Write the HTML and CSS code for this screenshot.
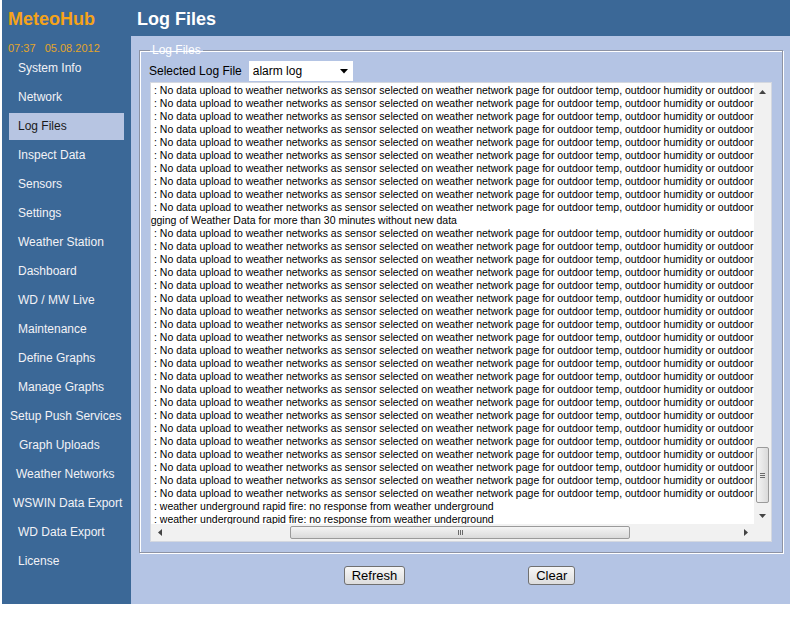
FILE: index.html
```html
<!DOCTYPE html>
<html lang='en'>
<head>
    <meta charset='UTF-8'>
    <title>MeteoHub - Log Files</title>
    <link rel="stylesheet" href="styles.css">
</head>
<body>
    <div class='frame'>
        <!-- Top left logo -->
        <div class='logo'>MeteoHub</div>
        <!-- Page title -->
        <div class='page-title'>Log Files</div>

        <!-- Sidebar -->
        <div class='sidebar'>
            <div class='clock'>07:37&nbsp;&nbsp;&nbsp;05.08.2012</div>
            <div class='nav-item'>System Info</div>
            <div class='nav-item'>Network</div>
            <div class='nav-item active'>Log Files</div>
            <div class='nav-item'>Inspect Data</div>
            <div class='nav-item'>Sensors</div>
            <div class='nav-item'>Settings</div>
            <div class='nav-item'>Weather Station</div>
            <div class='nav-item'>Dashboard</div>
            <div class='nav-item'>WD / MW Live</div>
            <div class='nav-item'>Maintenance</div>
            <div class='nav-item'>Define Graphs</div>
            <div class='nav-item'>Manage Graphs</div>
            <div class='nav-item wide'>Setup Push Services</div>
            <div class='nav-item nudge'>Graph Uploads</div>
            <div class='nav-item mid'>Weather Networks</div>
            <div class='nav-item semi'>WSWIN Data Export</div>
            <div class='nav-item'>WD Data Export</div>
            <div class='nav-item'>License</div>
        </div>

        <!-- Main panel -->
        <div class='main'>
            <fieldset class='log-set'>
                <legend>Log Files</legend>
                <div class='select-row'>
                    <span class='select-label'>Selected Log File</span>
                    <div class='select-field'>
                        <span>alarm log</span>
                        <svg width='8' height='5' viewBox='0 0 8 5'><path d='M0 0h8L4 4.5z' fill='#000'/></svg>
                    </div>
                </div>

                <div class='log-box'>
                    <div class='log-lines' id='log-lines'></div>
                    <div class='vscroll'>
                        <div class='arrow'><svg width='7' height='4' viewBox='0 0 7 4'><path d='M0 4h7L3.5 0z' fill='#444'/></svg></div>
                        <div class='vtrack'>
                            <div class='vthumb'><span class='grip-v'></span></div>
                        </div>
                        <div class='arrow'><svg width='7' height='4' viewBox='0 0 7 4'><path d='M0 0h7L3.5 4z' fill='#444'/></svg></div>
                    </div>
                    <div class='hscroll'>
                        <div class='arrow'><svg width='4' height='7' viewBox='0 0 4 7'><path d='M4 0v7L0 3.5z' fill='#444'/></svg></div>
                        <div class='htrack'>
                            <div class='hthumb'><span class='grip-h'></span></div>
                        </div>
                        <div class='arrow'><svg width='4' height='7' viewBox='0 0 4 7'><path d='M0 0v7l4-3.5z' fill='#444'/></svg></div>
                    </div>
                    <div class='corner'></div>
                </div>
            </fieldset>

            <div class='actions'>
                <button class='btn'>Refresh</button>
                <button class='btn'>Clear</button>
            </div>
        </div>
    </div>

    <script>
        // fill the log view
        const noData = ': No data upload to weather networks as sensor selected on weather network page for outdoor temp, outdoor humidity or outdoor pressure';
        const rapid = ': weather underground rapid fire: no response from weather underground';
        const lines = [];
        for (let i = 0; i < 10; i++) lines.push(['', noData]);
        lines.push(['alarm', 'Logging of Weather Data for more than 30 minutes without new data']);
        for (let i = 0; i < 21; i++) lines.push(['', noData]);
        lines.push(['', rapid]);
        lines.push(['', rapid]);

        const box = document.getElementById('log-lines');
        lines.forEach(([cls, text]) => {
            const div = document.createElement('div');
            div.className = 'log-line ' + cls;
            div.textContent = text;
            box.appendChild(div);
        });
    </script>
</body>
</html>
```

FILE: styles.css
```css
* {
    box-sizing: border-box;
    margin: 0;
    padding: 0;
    font-family: 'Liberation Sans', Arial, sans-serif;
}

body {
    background-color: #ffffff;
}

.frame {
    width: 788px;
    height: 604px;
    margin-left: 2px;
    background-color: #3b6897;
    display: grid;
    grid-template-columns: 129px 1fr;
    grid-template-rows: 36px 1fr;
}

.logo {
    font-size: 18px;
    font-weight: bold;
    color: #f5a31a;
    padding: 9px 0 0 6px;
}

.page-title {
    font-size: 18px;
    font-weight: bold;
    color: #ffffff;
    padding: 9px 0 0 6px;
}

.sidebar {
    display: flex;
    flex-direction: column;
    gap: 2px;
    padding-left: 7px;
}

.clock {
    font-size: 11px;
    color: #e3a52a;
    height: 17px;
    line-height: 12px;
    padding-top: 6px;
    margin-left: -1px;
}

.nav-item {
    width: 115px;
    height: 27px;
    line-height: 27px;
    padding-left: 9px;
    font-size: 12px;
    color: #f2f2f6;
    white-space: nowrap;
}

.nav-item.active {
    background-color: #b7c5e2;
    color: #1a1a1a;
}

.nav-item.wide {
    padding-left: 1px;
}

.nav-item.nudge {
    padding-left: 10px;
}

.nav-item.mid {
    padding-left: 7px;
}

.nav-item.semi {
    padding-left: 4px;
}

.main {
    background-color: #b4c4e4;
    padding: 7px 7px 0 8px;
}

/* Fieldset */
.log-set {
    border: 1px solid #8d93a4;
    box-shadow: inset 1px 1px 0 #ffffff, 1px 1px 0 #ffffff;
    padding: 4px 10px 10px 10px;
}

.log-set legend {
    font-size: 12px;
    line-height: 14px;
    color: #ffffff;
    padding: 0 2px;
}

.select-row {
    display: flex;
    align-items: center;
    gap: 7px;
    margin-bottom: 1px;
}

.select-label {
    font-size: 12px;
    color: #000000;
    margin-left: -1px;
}

.select-field {
    width: 104px;
    height: 20px;
    background-color: #ffffff;
    display: flex;
    justify-content: space-between;
    align-items: center;
    padding: 0 5px 0 4px;
    font-size: 12px;
    color: #000000;
}

/* Log view */
.log-box {
    display: grid;
    grid-template-columns: 1fr 17px;
    grid-template-rows: 441px 17px;
    background-color: #ffffff;
    border: 1px solid #d4d8e0;
}

.log-lines {
    overflow: hidden;
    padding: 1px 0 0 3px;
}

.log-line {
    font-size: 10.5px;
    line-height: 13px;
    color: #000000;
    white-space: pre;
}

.log-line.alarm {
    margin-left: -15px;
}

.vscroll {
    display: flex;
    flex-direction: column;
    background-color: #f1f1f1;
}

.hscroll {
    display: flex;
    background-color: #f1f1f1;
}

.arrow {
    width: 17px;
    height: 17px;
    display: flex;
    justify-content: center;
    align-items: center;
    flex-shrink: 0;
}

.vtrack {
    flex: 1;
    padding: 0 2px;
}

.vthumb {
    margin-top: 347px;
    height: 56px;
    border: 1px solid #9a9a9a;
    border-radius: 2px;
    background: linear-gradient(to right, #f4f4f4, #dadada);
    display: flex;
    justify-content: center;
    align-items: center;
}

.grip-v {
    width: 5px;
    height: 5px;
    border-top: 1px solid #6a6a6a;
    border-bottom: 1px solid #6a6a6a;
    background: linear-gradient(#6a6a6a, #6a6a6a) center / 5px 1px no-repeat;
}

.htrack {
    flex: 1;
    padding: 2px 0;
}

.hthumb {
    margin-left: 122px;
    width: 340px;
    height: 100%;
    border: 1px solid #9a9a9a;
    border-radius: 2px;
    background: linear-gradient(#f4f4f4, #dadada);
    display: flex;
    justify-content: center;
    align-items: center;
}

.grip-h {
    width: 5px;
    height: 5px;
    border-left: 1px solid #6a6a6a;
    border-right: 1px solid #6a6a6a;
    background: linear-gradient(#6a6a6a, #6a6a6a) center / 1px 5px no-repeat;
}

.corner {
    background-color: #f1f1f1;
}

/* Buttons */
.actions {
    display: flex;
    justify-content: center;
    gap: 123px;
    margin-top: 13px;
    padding-right: 3px;
}

.btn {
    height: 19px;
    padding: 0 7px;
    font-size: 13px;
    line-height: 17px;
    color: #000000;
    background: linear-gradient(#f7f7f7, #dddddd);
    border: 1px solid #707070;
    border-radius: 3px;
    cursor: pointer;
}
```
